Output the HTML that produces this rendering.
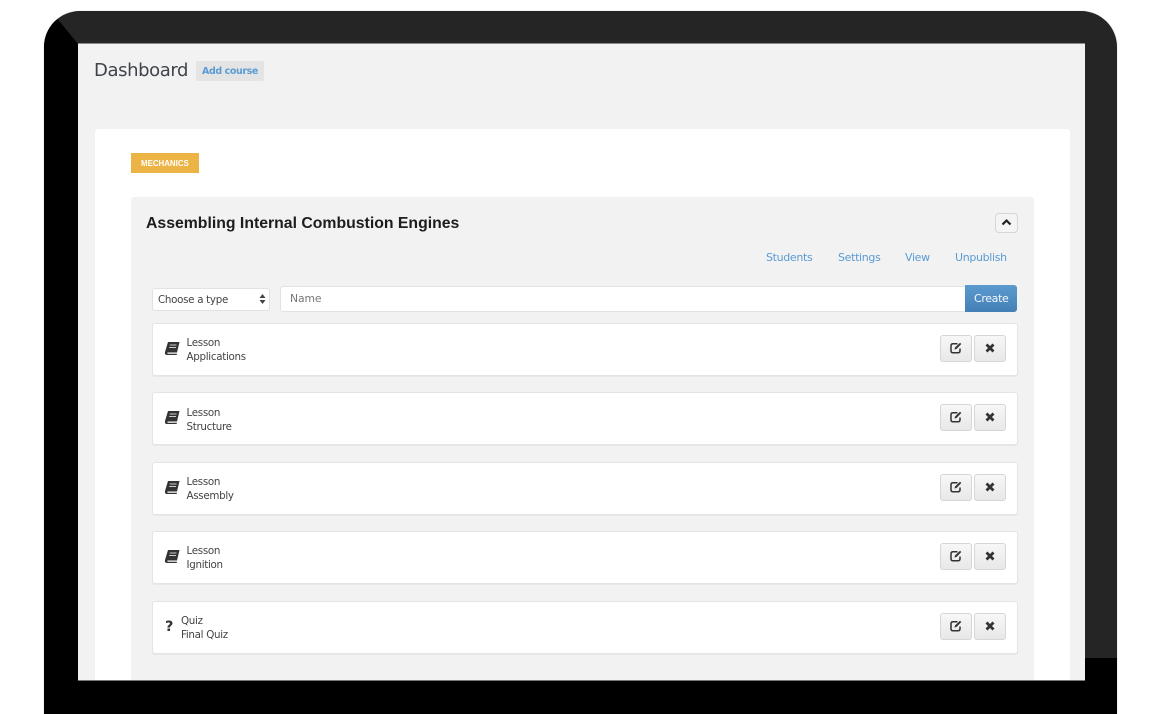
<!DOCTYPE html>
<html lang="en"><head><meta charset="utf-8"><title>Dashboard</title>
<style>
html,body{margin:0;padding:0;background:#fff}
body{width:1150px;height:714px;position:relative;overflow:hidden;font-family:"DejaVu Sans","Liberation Sans",sans-serif;color:#444}
.a{position:absolute}
.t{position:absolute;white-space:nowrap;line-height:1}
.frame{left:44px;top:11px;width:1073px;height:703px;background:#252525;border-radius:36px 36px 0 0;overflow:hidden;box-shadow:0 0 1px #aaa}
.screen{left:78px;top:44px;width:1007px;height:636px;background:#f2f2f2;overflow:hidden;box-shadow:0 -1px 0 #8a8a8a,0 1px 0 #777}
.row{position:absolute;left:152px;width:864px;height:51px;background:#fff;border:1px solid #e4e4e4;border-radius:3px;box-shadow:0 1px 0 #e8e8e8}
.btn{position:absolute;top:11px;width:30px;height:25px;border:1px solid #d6d6d6;border-radius:3px;background:linear-gradient(#f7f7f7,#e8e8e8)}
.b1{left:787px}.b2{left:821px}
.btn svg{position:absolute;left:8px;top:5px}
.l{left:33.500px;font-size:10.300px;letter-spacing:-.3px;color:#444}
.lnk{color:#5a9bd4;font-size:11px;letter-spacing:-.33px;top:252px}
.book{left:11px;top:17px}
</style></head><body>
<div class="a frame"><svg class="a" style="left:0;top:0" width="1073" height="703"><path d="M0 0H7L34 33V703H0Z" fill="#000"/><path d="M0 669V647H1041V669H1073V703H0Z" fill="#000"/><path d="M1041 647H1073V669H1041Z" fill="#000"/></svg></div>
<div class="a screen"></div>

<div class="t" style="left:94px;top:62px;font-size:18px;letter-spacing:-.4px;color:#3f444a">Dashboard</div>
<div class="a" style="left:196px;top:61px;width:68px;height:20px;background:#e4e4e4;border-radius:2px"></div>
<div class="t" style="left:202px;top:67px;font-size:9.500px;letter-spacing:-.4px;font-weight:bold;color:#5a9bd4">Add course</div>

<div class="a" style="left:95px;top:129px;width:975px;height:551px;background:#fff;border-radius:3px 3px 0 0"></div>
<div class="a" style="left:131px;top:153px;width:68px;height:20px;background:#ecb444"></div>
<div class="t" style="left:141px;top:159.500px;font-size:7.900px;font-weight:bold;color:#fff;font-family:'Liberation Sans',sans-serif">MECHANICS</div>

<div class="a" style="left:131px;top:197px;width:903px;height:483px;background:#f2f2f2;border-radius:3px 3px 0 0"></div>
<div class="t" style="left:146px;top:215.500px;font-size:15.800px;font-weight:bold;color:#1d1d1d;font-family:'Liberation Sans',sans-serif">Assembling Internal Combustion Engines</div>

<div class="a" style="left:995px;top:213px;width:21px;height:18px;border:1px solid #d6d6d6;border-radius:4px;background:#f4f4f4"></div>
<svg class="a" style="left:1001px;top:218px" width="11" height="9"><path d="M1.500 6.500L5.500 2.500L9.500 6.500" fill="none" stroke="#222" stroke-width="2.200"/></svg>

<div class="t lnk" style="left:766px">Students</div>
<div class="t lnk" style="left:838px">Settings</div>
<div class="t lnk" style="left:905px">View</div>
<div class="t lnk" style="left:955px">Unpublish</div>

<div class="a" style="left:152px;top:288px;width:116px;height:21px;background:#fff;border:1px solid #e2e2e2;border-radius:3px"></div>
<div class="t" style="left:158px;top:294.500px;font-size:10.300px;letter-spacing:-.3px;color:#444">Choose a type</div>
<svg class="a" style="left:259px;top:294px" width="7" height="10"><path d="M3.500 0L6.500 4H.5ZM3.500 10L.5 6H6.500Z" fill="#444"/></svg>
<div class="a" style="left:280px;top:286px;width:685px;height:24px;background:#fff;border:1px solid #e2e2e2;border-right:0;border-radius:3px 0 0 3px"></div>
<div class="t" style="left:290px;top:293.500px;font-size:10.800px;letter-spacing:-.1px;color:#777">Name</div>
<div class="a" style="left:965px;top:285px;width:52px;height:27px;background:linear-gradient(#5b9bd0,#4480b5);border-radius:0 3px 3px 0"></div>
<div class="t" style="left:974px;top:293px;font-size:11px;letter-spacing:-.35px;color:#f4f8fb">Create</div>

<div class="row" style="top:323px"><svg class="a book" width="16" height="15"><path d="M4 1H15.500L13 11.500H3.500Q3 12.500 3.800 12.800H13L12.600 14H3Q.5 14 1 11Z" fill="#333"/><path d="M5.800 4H12.500M5.200 6.500H12" stroke="#fff" stroke-width=".8"/></svg><div class="t l" style="top:14px">Lesson</div><div class="t l" style="top:28px">Applications</div><div class="btn b1"><svg width="14" height="14"><path d="M8.500 2.800H4Q2 2.800 2 4.800V9.800Q2 11.800 4 11.800H9Q11 11.800 11 9.800V7.500" fill="none" stroke="#333" stroke-width="1.500"/><path d="M5.500 8.500L6 6.500L11 1.800L12.300 3L7.500 8Z" fill="#333"/></svg></div><div class="btn b2"><svg width="14" height="14"><path d="M3.500 3.500L10.500 10.500M10.500 3.500L3.500 10.500" stroke="#333" stroke-width="2.800"/></svg></div></div>

<div class="row" style="top:392px"><svg class="a book" width="16" height="15"><path d="M4 1H15.500L13 11.500H3.500Q3 12.500 3.800 12.800H13L12.600 14H3Q.5 14 1 11Z" fill="#333"/><path d="M5.800 4H12.500M5.200 6.500H12" stroke="#fff" stroke-width=".8"/></svg><div class="t l" style="top:14.500px">Lesson</div><div class="t l" style="top:28.500px">Structure</div><div class="btn b1"><svg width="14" height="14"><path d="M8.500 2.800H4Q2 2.800 2 4.800V9.800Q2 11.800 4 11.800H9Q11 11.800 11 9.800V7.500" fill="none" stroke="#333" stroke-width="1.500"/><path d="M5.500 8.500L6 6.500L11 1.800L12.300 3L7.500 8Z" fill="#333"/></svg></div><div class="btn b2"><svg width="14" height="14"><path d="M3.500 3.500L10.500 10.500M10.500 3.500L3.500 10.500" stroke="#333" stroke-width="2.800"/></svg></div></div>

<div class="row" style="top:462px"><svg class="a book" width="16" height="15"><path d="M4 1H15.500L13 11.500H3.500Q3 12.500 3.800 12.800H13L12.600 14H3Q.5 14 1 11Z" fill="#333"/><path d="M5.800 4H12.500M5.200 6.500H12" stroke="#fff" stroke-width=".8"/></svg><div class="t l" style="top:14px">Lesson</div><div class="t l" style="top:28px">Assembly</div><div class="btn b1"><svg width="14" height="14"><path d="M8.500 2.800H4Q2 2.800 2 4.800V9.800Q2 11.800 4 11.800H9Q11 11.800 11 9.800V7.500" fill="none" stroke="#333" stroke-width="1.500"/><path d="M5.500 8.500L6 6.500L11 1.800L12.300 3L7.500 8Z" fill="#333"/></svg></div><div class="btn b2"><svg width="14" height="14"><path d="M3.500 3.500L10.500 10.500M10.500 3.500L3.500 10.500" stroke="#333" stroke-width="2.800"/></svg></div></div>

<div class="row" style="top:531px"><svg class="a book" width="16" height="15"><path d="M4 1H15.500L13 11.500H3.500Q3 12.500 3.800 12.800H13L12.600 14H3Q.5 14 1 11Z" fill="#333"/><path d="M5.800 4H12.500M5.200 6.500H12" stroke="#fff" stroke-width=".8"/></svg><div class="t l" style="top:14px">Lesson</div><div class="t l" style="top:28px">Ignition</div><div class="btn b1"><svg width="14" height="14"><path d="M8.500 2.800H4Q2 2.800 2 4.800V9.800Q2 11.800 4 11.800H9Q11 11.800 11 9.800V7.500" fill="none" stroke="#333" stroke-width="1.500"/><path d="M5.500 8.500L6 6.500L11 1.800L12.300 3L7.500 8Z" fill="#333"/></svg></div><div class="btn b2"><svg width="14" height="14"><path d="M3.500 3.500L10.500 10.500M10.500 3.500L3.500 10.500" stroke="#333" stroke-width="2.800"/></svg></div></div>

<div class="row" style="top:601px"><div class="t" style="left:12px;top:18px;font-size:14.500px;font-weight:bold;color:#333">?</div><div class="t l" style="left:28px;top:14px">Quiz</div><div class="t l" style="left:28px;top:28px">Final Quiz</div><div class="btn b1"><svg width="14" height="14"><path d="M8.500 2.800H4Q2 2.800 2 4.800V9.800Q2 11.800 4 11.800H9Q11 11.800 11 9.800V7.500" fill="none" stroke="#333" stroke-width="1.500"/><path d="M5.500 8.500L6 6.500L11 1.800L12.300 3L7.500 8Z" fill="#333"/></svg></div><div class="btn b2"><svg width="14" height="14"><path d="M3.500 3.500L10.500 10.500M10.500 3.500L3.500 10.500" stroke="#333" stroke-width="2.800"/></svg></div></div>
</body></html>
